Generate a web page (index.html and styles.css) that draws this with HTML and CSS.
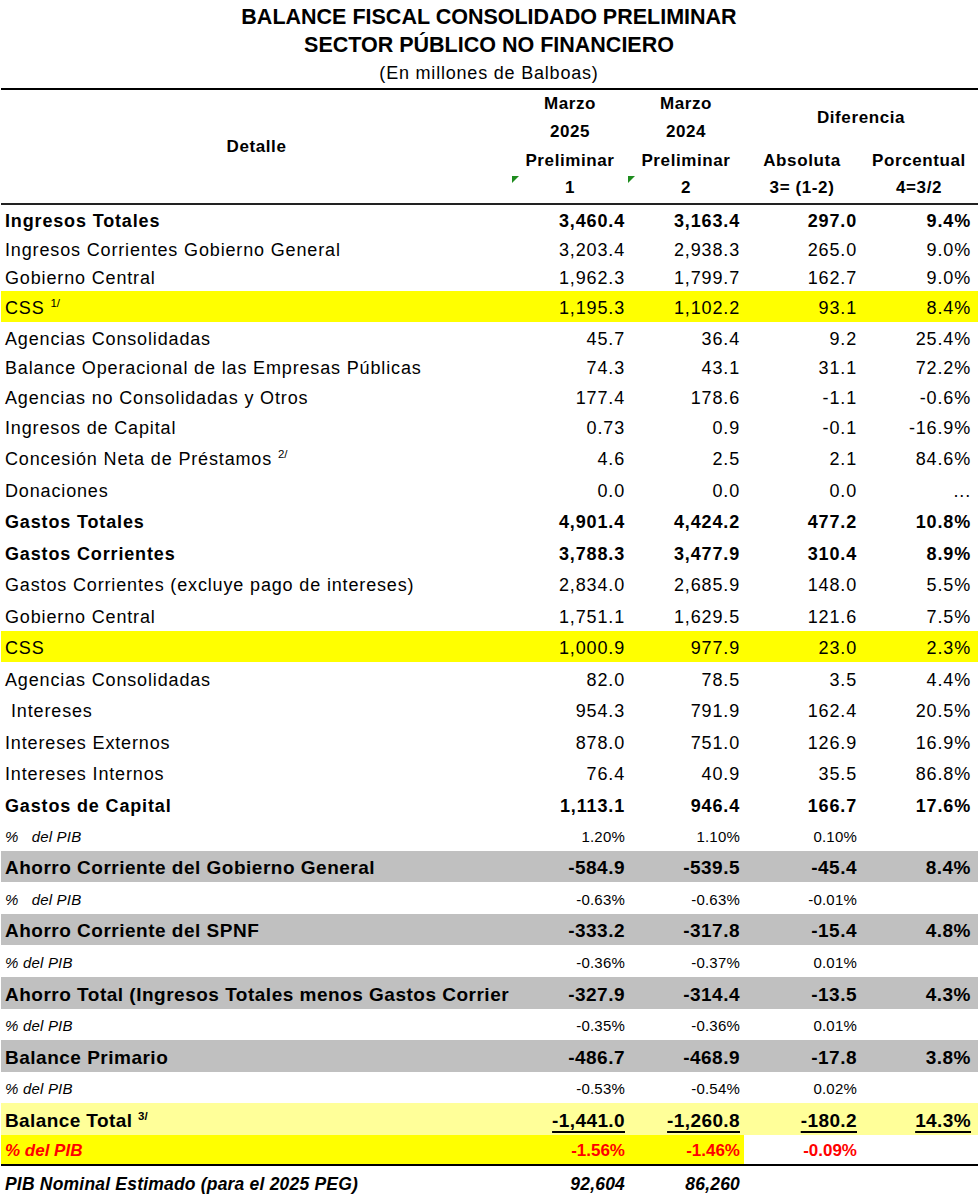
FILE: index.html
```html
<!DOCTYPE html>
<html lang="es">
<head>
<meta charset="utf-8">
<title>Balance Fiscal Consolidado Preliminar</title>
<link rel="stylesheet" href="styles.css">
</head>
<body>
<div class="sheet">
  <header class="titles">
    <div class="t1">BALANCE FISCAL CONSOLIDADO PRELIMINAR</div>
    <div class="t1">SECTOR PÚBLICO NO FINANCIERO</div>
    <div class="t2">(En millones de Balboas)</div>
  </header>
  <table class="grid">
    <colgroup>
      <col class="c0"><col class="c1"><col class="c2"><col class="c3"><col class="c4">
    </colgroup>
    <thead>
      <tr class="h1">
        <th rowspan="4" class="detalle">Detalle</th>
        <th>Marzo</th>
        <th>Marzo</th>
        <th colspan="2" rowspan="2">Diferencia</th>
      </tr>
      <tr class="h2">
        <th>2025</th>
        <th>2024</th>
      </tr>
      <tr class="h3">
        <th>Preliminar</th>
        <th>Preliminar</th>
        <th>Absoluta</th>
        <th>Porcentual</th>
      </tr>
      <tr class="h4">
        <th class="mark">1</th>
        <th class="mark">2</th>
        <th>3= (1-2)</th>
        <th>4=3/2</th>
      </tr>
    </thead>
    <tbody>
      <tr class="r29 bold"><td>Ingresos Totales</td><td>3,460.4</td><td>3,163.4</td><td>297.0</td><td>9.4%</td></tr>
      <tr class="r28"><td>Ingresos Corrientes Gobierno General</td><td>3,203.4</td><td>2,938.3</td><td>265.0</td><td>9.0%</td></tr>
      <tr class="r29"><td>Gobierno Central</td><td>1,962.3</td><td>1,799.7</td><td>162.7</td><td>9.0%</td></tr>
      <tr class="r31 yellow"><td>CSS <sup>1/</sup></td><td>1,195.3</td><td>1,102.2</td><td>93.1</td><td>8.4%</td></tr>
      <tr class="r30"><td>Agencias Consolidadas</td><td>45.7</td><td>36.4</td><td>9.2</td><td>25.4%</td></tr>
      <tr class="r29"><td>Balance Operacional de las Empresas Públicas</td><td>74.3</td><td>43.1</td><td>31.1</td><td>72.2%</td></tr>
      <tr class="r30"><td>Agencias no Consolidadas y Otros</td><td>177.4</td><td>178.6</td><td>-1.1</td><td>-0.6%</td></tr>
      <tr class="r30"><td>Ingresos de Capital</td><td>0.73</td><td>0.9</td><td>-0.1</td><td>-16.9%</td></tr>
      <tr class="r32"><td>Concesión Neta de Préstamos <sup>2/</sup></td><td>4.6</td><td>2.5</td><td>2.1</td><td>84.6%</td></tr>
      <tr class="r32"><td>Donaciones</td><td>0.0</td><td>0.0</td><td>0.0</td><td>...</td></tr>
      <tr class="r31 bold"><td>Gastos Totales</td><td>4,901.4</td><td>4,424.2</td><td>477.2</td><td>10.8%</td></tr>
      <tr class="r32 bold"><td>Gastos Corrientes</td><td>3,788.3</td><td>3,477.9</td><td>310.4</td><td>8.9%</td></tr>
      <tr class="r31"><td>Gastos Corrientes (excluye pago de intereses)</td><td>2,834.0</td><td>2,685.9</td><td>148.0</td><td>5.5%</td></tr>
      <tr class="r32"><td>Gobierno Central</td><td>1,751.1</td><td>1,629.5</td><td>121.6</td><td>7.5%</td></tr>
      <tr class="r31 yellow"><td>CSS</td><td>1,000.9</td><td>977.9</td><td>23.0</td><td>2.3%</td></tr>
      <tr class="r32"><td>Agencias Consolidadas</td><td>82.0</td><td>78.5</td><td>3.5</td><td>4.4%</td></tr>
      <tr class="r31"><td class="indent">Intereses</td><td>954.3</td><td>791.9</td><td>162.4</td><td>20.5%</td></tr>
      <tr class="r32"><td>Intereses Externos</td><td>878.0</td><td>751.0</td><td>126.9</td><td>16.9%</td></tr>
      <tr class="r31"><td>Intereses Internos</td><td>76.4</td><td>40.9</td><td>35.5</td><td>86.8%</td></tr>
      <tr class="r32 bold"><td>Gastos de Capital</td><td>1,113.1</td><td>946.4</td><td>166.7</td><td>17.6%</td></tr>
      <tr class="r31 small"><td class="pre">%   del PIB</td><td>1.20%</td><td>1.10%</td><td>0.10%</td><td></td></tr>
      <tr class="r31 gray"><td>Ahorro Corriente del Gobierno General</td><td>-584.9</td><td>-539.5</td><td>-45.4</td><td>8.4%</td></tr>
      <tr class="r32 small"><td class="pre">%   del PIB</td><td>-0.63%</td><td>-0.63%</td><td>-0.01%</td><td></td></tr>
      <tr class="r31 gray"><td>Ahorro Corriente del SPNF</td><td>-333.2</td><td>-317.8</td><td>-15.4</td><td>4.8%</td></tr>
      <tr class="r32 small"><td>% del PIB</td><td>-0.36%</td><td>-0.37%</td><td>0.01%</td><td></td></tr>
      <tr class="r32 gray"><td>Ahorro Total (Ingresos Totales menos Gastos Corrier</td><td>-327.9</td><td>-314.4</td><td>-13.5</td><td>4.3%</td></tr>
      <tr class="r31 small"><td>% del PIB</td><td>-0.35%</td><td>-0.36%</td><td>0.01%</td><td></td></tr>
      <tr class="r32 gray"><td>Balance Primario</td><td>-486.7</td><td>-468.9</td><td>-17.8</td><td>3.8%</td></tr>
      <tr class="r31 small"><td>% del PIB</td><td>-0.53%</td><td>-0.54%</td><td>0.02%</td><td></td></tr>
      <tr class="r32 total"><td>Balance Total <sup>3/</sup></td><td><u>-1,441.0</u></td><td><u>-1,260.8</u></td><td><u>-180.2</u></td><td><u>14.3%</u></td></tr>
      <tr class="r31 red"><td class="hl">% del PIB</td><td class="hl">-1.56%</td><td class="hl">-1.46%</td><td>-0.09%</td><td></td></tr>
      <tr class="r32 pib"><td>PIB Nominal Estimado (para el 2025 PEG)</td><td>92,604</td><td>86,260</td><td></td><td></td></tr>
    </tbody>
  </table>
</div>
</body>
</html>
```
FILE: styles.css
```css
html, body {
  margin: 0;
  padding: 0;
  background: #ffffff;
}

body {
  font-family: "Liberation Sans", Arial, sans-serif;
  color: #000000;
}

.sheet {
  width: 978px;
}

.titles {
  padding-top: 3px;
  height: 85px;
  text-align: center;
}

.t1 {
  font-weight: bold;
  font-size: 21.5px;
  line-height: 28px;
}

.t2 {
  font-size: 18px;
  line-height: 28px;
  letter-spacing: 0.8px;
}

.grid {
  margin-left: 1px;
  width: 977px;
  table-layout: fixed;
  border-collapse: separate;
  border-spacing: 0;
}

.c0 { width: 511px; }
.c1 { width: 116px; }
.c2 { width: 116px; }
.c3 { width: 116px; }
.c4 { width: 118px; }

th {
  font-size: 17px;
  font-weight: bold;
  letter-spacing: 0.6px;
  text-align: center;
  padding: 0;
  vertical-align: middle;
}

.h1 { height: 29px; }
.h1 th { border-top: 2px solid #000; }
.h2 { height: 29px; }
.h3 { height: 29px; }
.h4 { height: 30px; }
.h4 th { border-bottom: 2px solid #222; padding-bottom: 2px; }
th.detalle { border-bottom: 2px solid #222; }

th.mark { position: relative; }
th.mark::before {
  content: "";
  position: absolute;
  left: 0;
  top: 1px;
  width: 0;
  height: 0;
  border-top: 7px solid #1e8c1e;
  border-right: 7px solid transparent;
}

td {
  font-size: 18px;
  letter-spacing: 0.85px;
  padding: 3px 0 0 0;
  vertical-align: middle;
  white-space: nowrap;
  overflow: hidden;
  text-align: right;
  line-height: 20px;
}

td:first-child {
  text-align: left;
  padding-left: 4px;
}

td:nth-child(2) { padding-right: 3px; }
td:nth-child(3) { padding-right: 4px; }
td:nth-child(4) { padding-right: 3px; }
td:nth-child(5) { padding-right: 7px; }

.r28 { height: 28px; }
.r29 { height: 29px; }
.r30 { height: 30px; }
.r31 { height: 31px; }
.r32 { height: 32px; }

.bold td { font-weight: bold; }

.yellow td { background: #ffff00; }

sup {
  font-size: 11.5px;
  letter-spacing: 0;
  vertical-align: 7px;
  line-height: 0;
}

td.indent { padding-left: 10px; }

.small td {
  font-size: 15px;
  letter-spacing: 0.2px;
}

.small td:first-child { font-style: italic; }

td.pre { white-space: pre; }

.gray td {
  background: #c0c0c0;
  font-weight: bold;
  font-size: 19px;
  letter-spacing: 0.5px;
}

.total td {
  background: #ffff99;
  font-weight: bold;
  font-size: 19px;
  letter-spacing: 0.4px;
}

.total u {
  text-decoration-thickness: 2px;
  text-underline-offset: 4px;
}

.red td {
  color: #ff0000;
  font-weight: bold;
  font-style: italic;
  font-size: 17px;
  letter-spacing: 0;
  border-bottom: 2px solid #000;
}

.red td:nth-child(2),
.red td:nth-child(3),
.red td:nth-child(4) { font-style: normal; }

.red td.hl { background: #ffff00; }

.pib td {
  font-weight: bold;
  font-style: italic;
  font-size: 17.5px;
  letter-spacing: 0.2px;
}
```
